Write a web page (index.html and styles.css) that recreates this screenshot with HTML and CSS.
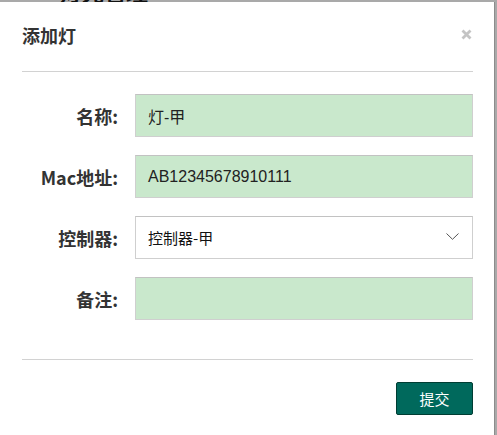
FILE: index.html
```html
<!DOCTYPE html>
<html lang="zh">
<head>
<meta charset="utf-8">
<title>添加灯</title>
<link rel="stylesheet" href="styles.css">
</head>
<body>
<div class="page">
  <div class="page-title">灯光管理</div>
</div>
<div class="modal">
  <div class="modal-header">
    <h4 class="modal-title">添加灯</h4>
    <span class="close" aria-label="关闭">
      <svg width="11" height="11" viewBox="0 0 11 11"><path d="M1.5 1.5 L9.5 9.5 M9.5 1.5 L1.5 9.5" stroke="#c4c4c4" stroke-width="2.8" stroke-linecap="butt"/></svg>
    </span>
  </div>
  <form class="modal-body">
    <div class="row">
      <label class="label">名称:</label>
      <div class="field filled">灯-甲</div>
    </div>
    <div class="row">
      <label class="label">Mac地址:</label>
      <div class="field filled">AB12345678910111</div>
    </div>
    <div class="row">
      <label class="label">控制器:</label>
      <div class="field select">
        <span>控制器-甲</span>
        <svg class="chev" width="13" height="7" viewBox="0 0 13 7"><path d="M0.5 0.5 L6.5 6.3 L12.5 0.5" fill="none" stroke="#555" stroke-width="1"/></svg>
      </div>
    </div>
    <div class="row">
      <label class="label">备注:</label>
      <div class="field filled"></div>
    </div>
  </form>
  <div class="modal-footer">
    <button class="btn" type="button">提交</button>
  </div>
</div>
</body>
</html>
```
FILE: styles.css
```css
html, body {
  margin: 0;
  padding: 0;
}
body {
  background: #a9a9a9;
  width: 497px;
  height: 435px;
  overflow: hidden;
  font-family: "Liberation Sans", "Noto Sans CJK SC", sans-serif;
}
.page {
  padding-left: 60px;
}
.page-title {
  margin-top: -21px;
  font-family: "Noto Sans CJK SC", sans-serif;
  font-weight: bold;
  font-size: 22px;
  line-height: 24px;
  color: #111;
}
.modal {
  position: absolute;
  left: 0;
  top: 2px;
  width: 494px;
  height: 440px;
  background: #fff;
  box-shadow: 1px 0 0 #8c8c8c;
  box-sizing: border-box;
  padding: 0 21px 0 22px;
}
.modal-header {
  display: flex;
  align-items: center;
  justify-content: space-between;
  height: 69px;
  border-bottom: 1px solid #d2d2d2;
}
.modal-title {
  margin: 0;
  font-family: "Noto Sans CJK SC", sans-serif;
  font-weight: bold;
  font-size: 18px;
  color: #333;
  padding-bottom: 4px;
}
.close {
  display: flex;
  margin-right: 1px;
  padding-bottom: 4px;
}
.modal-body {
  display: flex;
  flex-direction: column;
  gap: 18px;
  padding: 22px 0 39px;
  margin: 0;
  border-bottom: 1px solid #d2d2d2;
}
.row {
  display: flex;
  align-items: center;
}
.label {
  width: 96px;
  text-align: right;
  font-family: "Noto Sans CJK SC", sans-serif;
  font-weight: bold;
  font-size: 18px;
  color: #333;
  padding-right: 17px;
}
.field {
  flex: 1;
  height: 43px;
  box-sizing: border-box;
  display: flex;
  align-items: center;
  padding-left: 12px;
  font-size: 16px;
  color: #222;
  border: 1px solid #cfcfcf;
  border-top-color: #c2c2c2;
}
.field.filled {
  background: #c9e8cc;
}
.field.select {
  background: #fff;
  padding-right: 13px;
  justify-content: space-between;
  font-family: "Noto Sans CJK SC", sans-serif;
  font-size: 15px;
  color: #111;
}
.chev {
  margin-top: -3px;
}
.modal-footer {
  display: flex;
  justify-content: flex-end;
  padding-top: 22px;
}
.btn {
  width: 77px;
  height: 33px;
  background: #00695c;
  border: 1px solid #003d33;
  border-radius: 2px;
  color: #fff;
  font-family: "Noto Sans CJK SC", sans-serif;
  font-size: 15px;
  padding: 0;
}
```
